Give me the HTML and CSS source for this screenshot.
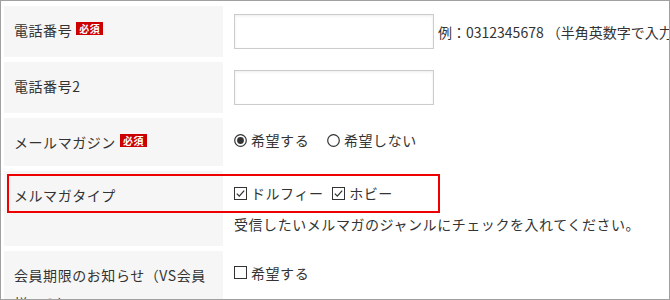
FILE: index.html
```html
<!DOCTYPE html>
<html lang="ja">
<head>
    <meta charset="UTF-8">
    <meta name="viewport" content="width=device-width, initial-scale=1.0">
    <title>会員情報入力</title>
    <link rel="stylesheet" href="styles.css">
</head>
<body>
    <div class="frame">
        <table class="form-table">
            <colgroup>
                <col class="col-label">
                <col>
            </colgroup>
            <tbody>
                <tr>
                    <th>電話番号<span class="required">必須</span></th>
                    <td>
                        <div class="field">
                            <input type="text" class="text-input" name="tel">
                            <span class="note">例：0312345678 （半角英数字で入力）</span>
                        </div>
                    </td>
                </tr>
                <tr>
                    <th>電話番号2</th>
                    <td>
                        <div class="field">
                            <input type="text" class="text-input" name="tel2">
                        </div>
                    </td>
                </tr>
                <tr>
                    <th>メールマガジン<span class="required">必須</span></th>
                    <td>
                        <label class="choice choice-radio">
                            <svg class="mark" width="13" height="13" viewBox="0 0 13 13"><circle cx="6.5" cy="6.5" r="5.8" fill="#fff" stroke="#333" stroke-width="1.2"/><circle cx="6.5" cy="6.5" r="3.4" fill="#333"/></svg>
                            希望する
                        </label>
                        <label class="choice choice-radio">
                            <svg class="mark" width="13" height="13" viewBox="0 0 13 13"><circle cx="6.5" cy="6.5" r="5.8" fill="#fff" stroke="#333" stroke-width="1.2"/></svg>
                            希望しない
                        </label>
                    </td>
                </tr>
                <tr>
                    <th>メルマガタイプ</th>
                    <td>
                        <div>
                            <label class="choice choice-check">
                                <svg class="mark" width="13" height="13" viewBox="0 0 13 13"><rect x="0.5" y="0.5" width="12" height="12" fill="#fff" stroke="#333"/><path d="M2.8 6.6 L5.3 9.1 L10.2 3.6" fill="none" stroke="#333" stroke-width="1.3"/></svg>
                                ドルフィー
                            </label>
                            <label class="choice choice-check">
                                <svg class="mark" width="13" height="13" viewBox="0 0 13 13"><rect x="0.5" y="0.5" width="12" height="12" fill="#fff" stroke="#333"/><path d="M2.8 6.6 L5.3 9.1 L10.2 3.6" fill="none" stroke="#333" stroke-width="1.3"/></svg>
                                ホビー
                            </label>
                        </div>
                        <p class="help">受信したいメルマガのジャンルにチェックを入れてください。</p>
                    </td>
                </tr>
                <tr>
                    <th>会員期限のお知らせ（VS会員様のみ）</th>
                    <td>
                        <label class="choice choice-check">
                            <svg class="mark" width="13" height="13" viewBox="0 0 13 13"><rect x="0.5" y="0.5" width="12" height="12" fill="#fff" stroke="#333"/></svg>
                            希望する
                        </label>
                    </td>
                </tr>
            </tbody>
        </table>
        <!-- annotation box -->
        <div class="highlight"></div>
    </div>
</body>
</html>
```

FILE: styles.css
```css
body {
    margin: 0;
    padding: 0;
    background-color: #fff;
    font-family: "Noto Sans CJK JP", "Noto Sans", sans-serif;
    font-size: 14px;
    letter-spacing: 0.04em;
    color: #333;
}
.frame {
    position: relative;
    width: 670px;
    height: 300px;
    box-sizing: border-box;
    border: 1px solid #a0a0a0;
    padding-left: 3px;
    overflow: hidden;
}
.form-table {
    width: 760px;
    table-layout: fixed;
    border-collapse: separate;
    border-spacing: 0 5px;
}
.col-label {
    width: 219px;
}
.form-table th {
    padding: 10px 14px 10px 10px;
    background-color: #f6f6f6;
    font-weight: normal;
    text-align: left;
    vertical-align: top;
    line-height: 28px;
}
.form-table td {
    padding: 8px 11px;
    vertical-align: top;
    line-height: 28px;
    white-space: nowrap;
}
.required {
    display: inline-block;
    margin-left: 4px;
    padding: 0 3px;
    background-color: #cc0000;
    color: #fff;
    font-size: 10px;
    font-weight: bold;
    letter-spacing: 0.5px;
    line-height: 13px;
    vertical-align: 3px;
}
.field {
    display: flex;
    align-items: center;
    gap: 4px;
}
.note {
    letter-spacing: 0;
}
.text-input {
    width: 200px;
    height: 35px;
    box-sizing: border-box;
    margin: 0;
    border: 1px solid #ccc;
    box-shadow: inset 0 1px 3px rgba(0, 0, 0, 0.08);
    font-size: 14px;
}
.choice {
    display: inline-flex;
    align-items: center;
    gap: 4px;
}
.choice-radio {
    margin-right: 14px;
}
.choice-check {
    margin-right: 5px;
}
.mark {
    flex: none;
}
.help {
    margin: 2px 0 0;
    line-height: 28px;
}
.highlight {
    position: absolute;
    top: 173px;
    left: 6px;
    width: 429px;
    height: 35px;
    border: 2px solid #ee0000;
}
```
